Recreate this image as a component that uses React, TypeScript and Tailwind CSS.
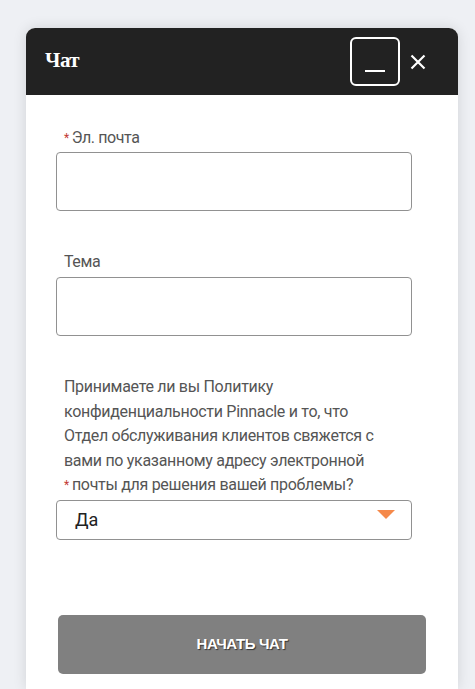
import React from "react";

export default function App() {
  const font = { fontFamily: "Roboto, 'Noto Sans', sans-serif" };
  return (
    <div className="min-h-[689px] w-[475px] bg-[#eef0f4] pt-[28px] pl-[26px] overflow-hidden" style={font}>
      <div className="w-[432px] h-[661px] bg-white rounded-t-[9px] shadow-[0_0_14px_rgba(0,0,0,0.12)] flex flex-col">
        <div className="h-[67px] bg-[#222222] rounded-t-[9px] flex items-center pl-[19px] pr-[32px]">
          <span className="text-white text-[21px] font-bold tracking-[-0.5px] mt-[-2px]" style={{ fontFamily: "'Liberation Serif', serif" }}>Чат</span>
          <div className="ml-auto flex items-center gap-[10px]">
            <div className="w-[50px] h-[49px] border-2 border-white rounded-[6px] flex items-end justify-center pb-[12px]">
              <div className="w-[20px] h-[2px] bg-white" />
            </div>
            <svg width="16" height="16" viewBox="0 0 16 16">
              <path d="M1.5 1.5 L14.5 14.5 M14.5 1.5 L1.5 14.5" stroke="white" strokeWidth="2.2" />
            </svg>
          </div>
        </div>
        <div className="flex flex-col pl-[30px] pr-[46px]">
          <div className="mt-[33px] pl-[8px] text-[16px] leading-[20px] text-[#555] tracking-[-0.4px]">
            <span className="text-[#c23934] text-[12px] align-top mr-[3px]">*</span>Эл. почта
          </div>
          <div className="mt-[4px] h-[59px] border border-[#919191] rounded-[4px]" />
          <div className="mt-[41px] pl-[8px] text-[16px] leading-[20px] text-[#555] tracking-[-0.4px]">Тема</div>
          <div className="mt-[5px] h-[59px] border border-[#919191] rounded-[4px]" />
          <div className="mt-[39px] pl-[8px] text-[16px] leading-[24.6px] text-[#555] tracking-[-0.3px] whitespace-nowrap">
            Принимаете ли вы Политику
            <br />
            конфиденциальности Pinnacle и то, что
            <br />
            Отдел обслуживания клиентов свяжется с
            <br />
            вами по указанному адресу электронной
            <br />
            <span className="text-[#c23934] text-[12px] align-top mr-[3px]">*</span>почты для решения вашей проблемы?
          </div>
          <div className="mt-[2px] h-[40px] border border-[#919191] rounded-[4px] flex items-center pl-[18px] pr-[16px]">
            <span className="text-[18px] text-[#222]">Да</span>
            <svg className="ml-auto self-start mt-[9px]" width="18" height="9" viewBox="0 0 18 9">
              <path d="M0 0 L18 0 L9 9 Z" fill="#f5894a" />
            </svg>
          </div>
        </div>
        <div className="mt-[75px] ml-[32px] w-[368px] h-[59px] bg-[#808080] rounded-[5px] flex items-center justify-center">
          <span className="text-white text-[15px] font-bold tracking-[-0.4px] [text-shadow:1px_1px_1px_rgba(0,0,0,0.6)]" style={{ fontFamily: "'Liberation Sans', Arial, sans-serif" }}>НАЧАТЬ ЧАТ</span>
        </div>
      </div>
    </div>
  );
}
